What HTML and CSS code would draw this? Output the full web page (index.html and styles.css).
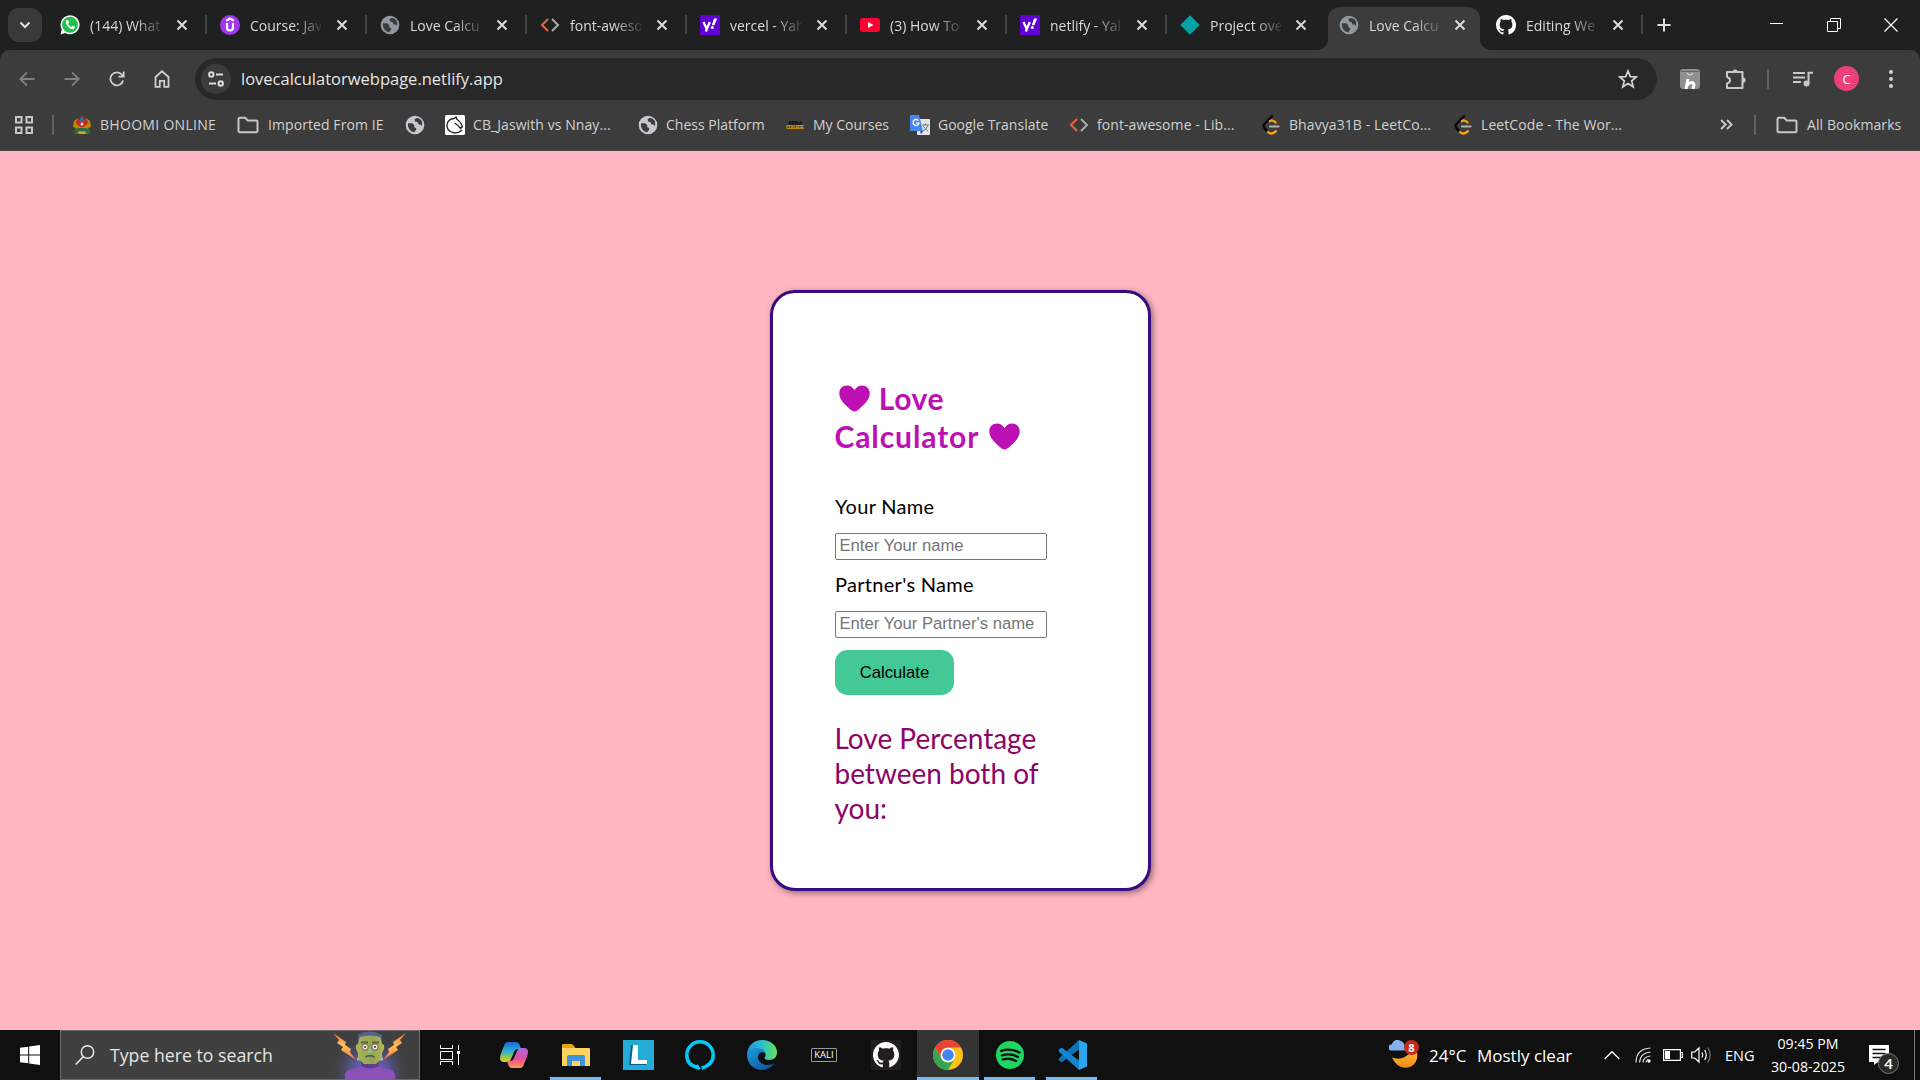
FILE: index.html
```html
<!DOCTYPE html>
<html lang="en">
<head>
<meta charset="utf-8">
<title>Love Calculator</title>
<link rel="stylesheet" href="styles.css">
</head>
<body>
<svg class="defs" width="0" height="0" aria-hidden="true">
  <defs>
    <symbol id="globe" viewBox="0 0 20 20"><circle cx="10" cy="10" r="9.3" fill="currentColor"/><path d="M3 8.200h4.200l2 1.800v2.200l2 .8v1.600l-2 2.600c-4-.5-6.600-4-6.200-9zM11.500 3l-2 1.200.6 2.300 2.400.6 1 2.400h2.400l.6 1.800c1-1.500.8-3.500.2-5.300-1-2-3-3-5.200-3z" fill="#3b3c3e"/></symbol>
    <symbol id="x" viewBox="0 0 12 12"><path d="M1.500 1.500l9 9M10.500 1.500l-9 9" stroke="currentColor" stroke-width="2" fill="none"/></symbol>
    <symbol id="code" viewBox="0 0 20 20"><path d="M8 4L2 10l6 6" stroke="#e8653a" stroke-width="2" fill="none"/><path d="M12 4l6 6-6 6" stroke="#aaa" stroke-width="2" fill="none"/></symbol>
    <symbol id="yahoo" viewBox="0 0 20 20"><path fill="#6001d2" d="M0 0h20v20H0z"/><path d="M3.500 7l3 6.500M9.800 7L5.800 16.500" stroke="#fff" stroke-width="2.300"/><path d="M14 3.500h3.200l-2.800 6.700h-2.600z" fill="#fff"/><circle cx="12.300" cy="12.400" r="1.500" fill="#fff"/></symbol>
    <symbol id="github" viewBox="0 0 16 16"><path fill="#fff" d="M8 0C3.580 0 0 3.580 0 8c0 3.540 2.290 6.530 5.470 7.590.4.070.55-.17.55-.38 0-.19-.01-.82-.01-1.490-2.010.37-2.530-.49-2.690-.94-.09-.23-.48-.94-.82-1.130-.28-.15-.68-.52-.01-.53.63-.01 1.080.58 1.230.82.72 1.210 1.870.87 2.330.66.070-.52.28-.87.51-1.070-1.780-.2-3.640-.89-3.640-3.950 0-.87.31-1.590.82-2.150-.08-.2-.36-1.020.08-2.120 0 0 .67-.21 2.200.82.640-.18 1.320-.27 2-.27s1.360.09 2 .27c1.530-1.040 2.200-.82 2.200-.82.440 1.100.16 1.920.08 2.120.51.56.82 1.270.82 2.150 0 3.070-1.870 3.750-3.650 3.950.29.25.54.73.54 1.480 0 1.070-.01 1.930-.01 2.200 0 .21.15.46.55.38A8 8 0 0 0 16 8c0-4.420-3.580-8-8-8z"/></symbol>
    <symbol id="folder" viewBox="0 0 22 18"><path d="M1.500 15V3q0-1.200 1.200-1.200h5.500l2.500 2.700h8.600q1.200 0 1.200 1.200V15q0 1.200-1.200 1.200H2.700Q1.500 16.200 1.500 15z" fill="none" stroke="#c7c7c7" stroke-width="2"/></symbol>
    <symbol id="leet" viewBox="0 0 20 20"><path d="M11 1L3.500 9q-1.800 2 0 4l3 3.500" fill="none" stroke="#070707" stroke-width="2.300" stroke-linecap="round"/><path d="M9 6q2.500-1.800 5.500 1.500M7 17q3.500 3.500 8-.8" fill="none" stroke="#ffa116" stroke-width="2.300" stroke-linecap="round"/><path d="M9 11.500h8.500" stroke="#b3b3b3" stroke-width="2.200" stroke-linecap="round"/></symbol>
    <symbol id="heart" viewBox="0 0 31 27"><path fill="#bc10b4" d="M15.500 26.500c-1.500 0-3-1-5-2.800C5.500 19.500.3 14.500.3 8.300.3 3.800 3.500.5 7.900.5c3.300 0 6 1.700 7.600 4.700C17.100 2.200 19.800.5 23.100.5c4.400 0 7.600 3.300 7.600 7.800 0 6.200-5.200 11.200-10.200 15.400-2 1.800-3.500 2.800-5 2.800z"/></symbol>
  </defs>
</svg>

<header class="tabstrip">
  <div class="tabsearch"><svg width="12" height="8" viewBox="0 0 12 8"><path d="M1.500 1.500L6 6l4.500-4.500" fill="none" stroke="#e3e3e3" stroke-width="2"/></svg></div>
  <div class="tab"><svg class="fav" viewBox="0 0 20 20"><path d="M.5 19.500l1.300-5A9.500 9.500 0 1 1 5.300 18z" fill="#fff"/><circle cx="10" cy="9.800" r="8" fill="#1fc14b"/><path d="M6.500 5.200c-3 2.600 3.600 10.500 7.300 8.700 1.200-.7 1.400-1.900.8-2.300l-1.900-.9c-.6 0-.9 1.200-1.500 1.100-1.300-.5-2.400-1.600-3-2.900.1-.6 1-.9.800-1.500L8.100 5.300c-.4-.5-1.100-.4-1.600-.1z" fill="#fff"/></svg><span class="title">(144) What</span><svg class="close"><use href="#x"/></svg></div>
  <div class="tab"><svg class="fav" viewBox="0 0 20 20"><circle cx="10" cy="10" r="10" fill="#a435f0"/><path d="M6.200 5.800L10 3.600l3.800 2.200M7 8v4.500q0 3 3 3t3-3V8" fill="none" stroke="#fff" stroke-width="2.200"/></svg><span class="title">Course: Jav</span><svg class="close"><use href="#x"/></svg></div>
  <div class="tab"><svg class="fav grey"><use href="#globe"/></svg><span class="title">Love Calcu</span><svg class="close"><use href="#x"/></svg></div>
  <div class="tab"><svg class="fav"><use href="#code"/></svg><span class="title">font-aweso</span><svg class="close"><use href="#x"/></svg></div>
  <div class="tab"><svg class="fav"><use href="#yahoo"/></svg><span class="title">vercel - Yah</span><svg class="close"><use href="#x"/></svg></div>
  <div class="tab"><svg class="fav" viewBox="0 0 20 20"><rect y="3" width="20" height="14" rx="3" fill="#ff0033"/><path d="M8 7l5.500 3L8 13z" fill="#fff"/></svg><span class="title">(3) How To</span><svg class="close"><use href="#x"/></svg></div>
  <div class="tab"><svg class="fav"><use href="#yahoo"/></svg><span class="title">netlify - Yal</span><svg class="close"><use href="#x"/></svg></div>
  <div class="tab last-before"><svg class="fav" viewBox="0 0 20 20"><path d="M10 .3l9.700 9.700-9.700 9.700L.3 10z" fill="#05a3a3"/></svg><span class="title">Project ove</span><svg class="close"><use href="#x"/></svg></div>
  <div class="tab active"><svg class="fav grey"><use href="#globe"/></svg><span class="title">Love Calcu</span><svg class="close"><use href="#x"/></svg></div>
  <div class="tab"><svg class="fav"><use href="#github"/></svg><span class="title">Editing We</span><svg class="close"><use href="#x"/></svg></div>
  <svg class="newtab" viewBox="0 0 14 14"><path d="M7 .5v13M.5 7h13" stroke="#dedede" stroke-width="2"/></svg>
  <div class="winbtns">
    <svg width="14" height="14"><path d="M0 5.500h13" stroke="#fff"/></svg>
    <svg width="14" height="14"><path d="M.5 3.500h10v10H.5zM3.500 3.500v-3h10v10h-3" fill="none" stroke="#fff"/></svg>
    <svg width="14" height="14"><path d="M.5.500l13 13M13.500.500l-13 13" stroke="#fff" stroke-width="1.200"/></svg>
  </div>
</header>

<div class="chrome">
  <div class="toolbar">
    <svg class="nav dim" viewBox="0 0 16 16"><path d="M15.500 8H1.500M8 1.300L1.300 8 8 14.700"/></svg>
    <svg class="nav dim" viewBox="0 0 16 16"><path d="M.5 8h14M8 1.300L14.700 8 8 14.700"/></svg>
    <svg class="nav" viewBox="0 0 16 16"><path d="M14.200 9.500A6.500 6.500 0 1 1 13 3.800l1.700 1.700M14.700.5v5.200H9.500"/></svg>
    <svg class="nav" viewBox="0 0 16 18"><path d="M1.500 7L8 1.300 14.500 7v9.800h-4.300v-6H5.800v6H1.500z"/></svg>
    <div class="omnibox">
      <div class="site"><svg width="16" height="16" viewBox="0 0 16 16"><g fill="none" stroke="#dcdcdc" stroke-width="2"><circle cx="3.300" cy="3.500" r="2.200"/><path d="M8 3.500h7M1 12.500h7"/><circle cx="12.700" cy="12.500" r="2.200"/></g></svg></div>
      <span class="url">lovecalculatorwebpage.netlify.app</span>
      <svg class="star" viewBox="0 0 20 20"><path d="M10 2l2.300 5.600 6 .4-4.600 3.900 1.500 5.900L10 14.500l-5.200 3.300 1.500-5.900L1.700 8l6-.4z" fill="none" stroke="#d4d4d4" stroke-width="1.700"/></svg>
    </div>
    <svg class="ext" viewBox="0 0 20 22"><rect y="1" width="20" height="20" rx="3" fill="#8f8f8f"/><path d="M1 3.500h18" stroke="#666"/><path d="M7 5q3 4 6 0" fill="none" stroke="#ddd" stroke-width="1.200"/><path d="M6 21l2-10M7 17q6-5 7 0l-1 4" fill="none" stroke="#fff" stroke-width="3"/></svg>
    <svg class="puzzle" viewBox="0 0 22 22"><path d="M2 4H17.500V20H2v-4.500q3-.7 3-3.200T2 9z" fill="none" stroke="#c9c9c9" stroke-width="2" stroke-linejoin="round"/><path d="M7.500 4a2.600 2.600 0 0 1 5.200 0zM18 9.500a2.600 2.600 0 0 1 0 5.200z" fill="#c9c9c9"/></svg>
    <i class="rule tall"></i>
    <svg class="media" viewBox="0 0 20 16"><path d="M0 2h12M0 6.500h12M0 11h8M15.500 12V1.700H20" fill="none" stroke="#c9c9c9" stroke-width="2"/><circle cx="13.500" cy="12.500" r="3" fill="#c9c9c9"/></svg>
    <span class="avatar">C</span>
    <svg class="dots" viewBox="0 0 6 20"><g fill="#d2d2d2"><circle cx="3" cy="3" r="2"/><circle cx="3" cy="10" r="2"/><circle cx="3" cy="17" r="2"/></g></svg>
  </div>
  <nav class="bookmarks">
    <svg class="apps" viewBox="0 0 18 18"><g fill="none" stroke="#c7c7c7" stroke-width="2"><path d="M1 1h5.500v5.500H1zM11.500 1H17v5.500h-5.500zM1 11.500h5.500V17H1zM11.500 11.500H17V17h-5.500z"/></g></svg>
    <i class="rule"></i>
    <a class="bm b1"><svg viewBox="0 0 20 20"><path d="M10 0l2.500 4-2.500 2-2.500-2z" fill="#a62a2a"/><path d="M2 6l4-3 2 3 2-2 2 2 2-3 4 3 1 6-3 1 2 5-4 1-4-2-4 2-4-1 2-5-3-1z" fill="#b8860b"/><path d="M6 3l2 4-2 4-2-4zM14 3l2 4-2 4-2-4z" fill="#c4231f"/><path d="M8 3h4v3H8z" fill="#356fa8"/><circle cx="10" cy="9" r="3.300" fill="#d2232a"/><circle cx="10" cy="9" r="1.500" fill="#dfe6ee"/><path d="M6 13h8v3H6zM2 15l4-2v5H1zM18 15l-4-2v5h5z" fill="#2a6b45"/><path d="M7 17h6v2H7z" fill="#d9a520"/></svg><span>BHOOMI ONLINE</span></a>
    <a class="bm b2"><svg class="wide"><use href="#folder"/></svg><span>Imported From IE</span></a>
    <a class="bm b3"><svg class="light"><use href="#globe"/></svg></a>
    <a class="bm b4"><svg viewBox="0 0 20 20"><rect width="20" height="20" rx="1.500" fill="#fff"/><path d="M17 15Q13 19 7.500 17.500 1.500 15.500 2 9.500 3 4 9 3.500l2-1.500 1 2.500q3 1.500 5.500 7l-2 2q-3-4-6-5.500" fill="none" stroke="#222" stroke-width="1.300"/></svg><span>CB_Jaswith vs Nnay...</span></a>
    <a class="bm b5"><svg class="light"><use href="#globe"/></svg><span>Chess Platform</span></a>
    <a class="bm b6"><svg viewBox="0 0 20 20"><text x="10" y="9.500" class="apna" fill="#050505" textLength="14">APNA</text><text x="10" y="14" class="apna" fill="#e8a100" textLength="18">COLLEGE</text></svg><span>My Courses</span></a>
    <a class="bm b7"><svg viewBox="0 0 20 20"><rect x="7" y="4" width="13" height="16" rx="1" fill="#e3e5e8"/><path d="M12 10h7M15.500 8.500V10M18 10q-1 4-5 6M13 11q2 3 5 5" stroke="#6a7a84" fill="none"/><path d="M1 0h8l4 16H1q-1 0-1-1V1q0-1 1-1z" fill="#4a85ee"/><path d="M10 16h3l-2 3.500z" fill="#2b58b8"/><path d="M8.400 5.600A3 3 0 1 0 9 8.200H6" fill="none" stroke="#fff" stroke-width="1.300"/></svg><span>Google Translate</span></a>
    <a class="bm b8"><svg><use href="#code"/></svg><span>font-awesome - Lib...</span></a>
    <a class="bm b9"><svg><use href="#leet"/></svg><span>Bhavya31B - LeetCo...</span></a>
    <a class="bm b10"><svg><use href="#leet"/></svg><span>LeetCode - The Wor...</span></a>
    <svg class="more" viewBox="0 0 12 10"><path d="M1 .8L5.200 5 1 9.200M6.500.8L10.700 5 6.500 9.200" fill="none" stroke="#c7c7c7" stroke-width="1.800"/></svg>
    <i class="rule"></i>
    <a class="bm b11"><svg class="wide"><use href="#folder"/></svg><span>All Bookmarks</span></a>
  </nav>
</div>

<main class="page">
  <section class="card">
    <h1><svg class="heart"><use href="#heart"/></svg> <span class="h1a">Love</span><br><span class="h1b">Calculator</span> <svg class="heart second"><use href="#heart"/></svg></h1>
    <label for="you">Your Name</label>
    <input id="you" placeholder="Enter Your name">
    <label for="partner">Partner's Name</label>
    <input id="partner" placeholder="Enter Your Partner's name">
    <button>Calculate</button>
    <p>Love Percentage<br>between both of<br>you:</p>
  </section>
</main>

<footer class="taskbar">
  <div class="start"><svg width="20" height="20" viewBox="0 0 20 20"><path d="M0 2.800l8.200-1.100v7.800H0zM9.200 1.500L20 0v9.500H9.200zM0 10.500h8.200v7.800L0 17.200zM9.200 10.500H20V20L9.200 18.500z" fill="#fff"/></svg></div>
  <div class="search">
    <svg class="lens" viewBox="0 0 20 20"><circle cx="12.500" cy="7" r="6.200" fill="none" stroke="#eee" stroke-width="1.400"/><path d="M8.200 11.700L.7 19.400" stroke="#eee" stroke-width="1.500"/></svg>
    <span>Type here to search</span>
    <svg class="monster" viewBox="0 0 88 48">
      <defs><radialGradient id="glow"><stop offset="0" stop-color="#7a72d8"/><stop offset=".5" stop-color="#615cae" stop-opacity=".7"/><stop offset="1" stop-color="#404040" stop-opacity="0"/></radialGradient><linearGradient id="bolt" x2="0" y2="1"><stop offset="0" stop-color="#ef7d3c"/><stop offset=".5" stop-color="#ffc25a"/><stop offset="1" stop-color="#ef6a42"/></linearGradient><linearGradient id="skin"><stop offset="0" stop-color="#a9b84e"/><stop offset=".6" stop-color="#93a552"/><stop offset="1" stop-color="#b3bd55"/></linearGradient></defs>
      <ellipse cx="44" cy="40" rx="40" ry="36" fill="url(#glow)"/>
      <path id="b" d="M7 2l13 9-1 3 6 4-1 3 6 8-15-10 2-3-6-4 2-3zM80 2L67 11l1 3-6 4 1 3-6 8 15-10-2-3 6-4-2-3z" fill="url(#bolt)"/>
      <path d="M19 48v-4q1-6 8-6l10-3h14l10 3q7 0 8 6v4z" fill="#8a52b8"/><path d="M35 29h18v6q-9 5-18 0z" fill="#613c8e"/>
      <path d="M31 28h5M52 28h5" stroke="#aeb3c0" stroke-width="3"/>
      <path d="M33 4q11-6 22 0l1 9q3 0 2 5l-2 4v5l-6 6H38l-6-6v-5l-2-4q-1-5 2-5z" fill="url(#skin)"/><path d="M32 12V4q12-7 24 0v8l-2-6q-10-3-20 0z" fill="#5e5c91"/>
      <path d="M35 11.500h7M46 11.500h7" stroke="#5d6638" stroke-width="1.800"/>
      <circle cx="39" cy="16" r="3.200" fill="#f4e6be" stroke="#6a5a74"/><circle cx="49" cy="16" r="3.200" fill="#f4e6be" stroke="#6a5a74"/><circle cx="39" cy="16" r="1.100" fill="#7b3146"/><circle cx="49" cy="16" r="1.100" fill="#7b3146"/><path d="M44 17l2.500 4.500h-5z" fill="#8fc1b4"/><path d="M39.500 26q4.500-2.500 9 0" stroke="#48525a" fill="none" stroke-width="1.600"/>
    </svg>
  </div>
  <div class="task first"><svg width="22" height="20" viewBox="0 0 22 20"><path d="M1.500 0v3.500h12V0M1.500 6.500h12v8h-12zM1.500 20v-3.500h12V20M19.500 0v5M19.500 9v11" fill="none" stroke="#fff"/><path d="M18 6h3v3h-3z" fill="#fff"/></svg></div>
  <div class="task"><svg width="28" height="26" viewBox="0 0 28 26"><defs><linearGradient id="cp1" x2="0" y2="1"><stop offset="0" stop-color="#1e62d4"/><stop offset=".45" stop-color="#22b2d9"/><stop offset=".75" stop-color="#95c94d"/><stop offset="1" stop-color="#f8ba28"/></linearGradient><linearGradient id="cp2" x2="0" y2="1"><stop offset="0" stop-color="#a968e4"/><stop offset=".55" stop-color="#e74f9b"/><stop offset="1" stop-color="#ff9650"/></linearGradient></defs><path d="M8 0h8q3 0 4 4l1 3h-3q-3 0-4 3l-3 7q-1 3-4 3H4q-4 0-4-4 0-3 4-12Q5 0 8 0z" fill="url(#cp1)"/><path d="M20 26h-8q-3 0-4-4l-1-3h3q3 0 4-3l3-7q1-3 4-3h3q4 0 4 4 0 3-4 12-1 4-4 4z" fill="url(#cp2)"/></svg></div>
  <div class="task open"><svg width="28" height="24" viewBox="0 0 28 24"><path d="M1 1h9l3 3v5H0V2q0-1 1-1z" fill="#e6a20f"/><path d="M0 5h27q1 0 1 1v16q0 1-1 1H1q-1 0-1-1z" fill="#ffd45e"/><path d="M5 23v-9q0-2 2-2h14q2 0 2 2v9h-5v-5h-8v5z" fill="#3d94dc"/></svg></div>
  <div class="task"><svg width="31" height="30" viewBox="0 0 31 30"><path d="M0 0h31v30H0z" fill="#25abd7"/><path d="M8 5L6 25h17l1-4H11l2-16z" fill="#0a6187"/><path d="M10 5h5v15h9v4H8z" fill="#fff"/></svg></div>
  <div class="task"><svg width="30" height="30" viewBox="0 0 30 30"><path d="M13 27.500C5 26 1.800 21 1.800 15a13.200 13.200 0 0 1 26.400 0c0 6-3.500 10.700-11.700 13.200" fill="none" stroke="#05c8f7" stroke-width="3.500"/><path d="M11.500 25l3 4.500" stroke="#05c8f7" stroke-width="3"/></svg></div>
  <div class="task"><svg width="30" height="30" viewBox="0 0 30 30"><defs><linearGradient id="e1"><stop offset="0" stop-color="#2092dc"/><stop offset=".5" stop-color="#2bbfd0"/><stop offset="1" stop-color="#67e158"/></linearGradient><linearGradient id="e2" x2="1" y2="1"><stop offset="0" stop-color="#1b9de2"/><stop offset="1" stop-color="#104a95"/></linearGradient></defs><path d="M0 14C1 5 7 0 15 0c9 0 15 6 15 12 0 5-3 8-8 8-4 0-5-1.500-4-3 2-4-1-7-6-7-6 0-11 2-12 4z" fill="url(#e1)"/><path d="M0 14c1-4 5-6 10-6 5 0 8 3 8 5-4-2-7 1-7 4 0 5 5 8 10 8 3 0 5-1 6.500-2C25 27 20 30 15 30 6 30 0 23 0 14z" fill="url(#e2)"/></svg></div>
  <div class="task"><span class="kali">KALI</span></div>
  <div class="task"><span class="ghbox"><svg width="26" height="26"><use href="#github"/></svg></span></div>
  <div class="task open current"><svg width="30" height="30" viewBox="0 0 30 30"><circle cx="15" cy="15" r="15" fill="#fbc31a"/><path d="M2 7.500A15 15 0 0 1 28 7.500H15a7.500 7.500 0 0 0-6.500 11.250z" fill="#e94335"/><path d="M2 7.500A15 15 0 0 0 15 30l6.500-11.250a7.500 7.500 0 0 1-13 0z" fill="#33a554"/><circle cx="15" cy="15" r="7.300" fill="#fff"/><circle cx="15" cy="15" r="5.800" fill="#4285f4"/></svg></div>
  <div class="task open"><svg width="28" height="28" viewBox="0 0 28 28"><circle cx="14" cy="14" r="14" fill="#1ed760"/><path d="M5 9.800q9-3 18.500 1.700M6 14.300q8-2.500 16 1.600M6.700 18.500q7-2 13.500 1.500" fill="none" stroke="#101010" stroke-width="2.300" stroke-linecap="round"/></svg></div>
  <div class="task open"><svg width="30" height="30" viewBox="0 0 30 30"><path d="M22 0L2.200 18q-1.500 1.500 0 2.600l1.300 1.200q1 .8 2.200 0L24 8z" fill="#0d72b9"/><path d="M22 30L2.200 12q-1.500-1.500 0-2.600l1.300-1.200q1-.8 2.200 0L24 22z" fill="#1485cf"/><path d="M22 0l8 3.500v23L22 30z" fill="#2aa5f0"/></svg></div>

  <div class="tray">
    <div class="weather"><svg width="30" height="30" viewBox="0 0 30 30"><defs><linearGradient id="mn" x2="0" y2="1"><stop offset="0" stop-color="#ffb62e"/><stop offset="1" stop-color="#f08a1c"/></linearGradient></defs><path d="M3 17.500q11 4 19-6l6 1q2 10-7 14.500-12 3.500-18-9.500z" fill="url(#mn)"/><path d="M2.500 10.500a3 3 0 0 1 0-6q3-6.500 8.500-4Q17 3 16 10.500z" fill="#83b2f3"/><circle cx="22.500" cy="7.500" r="7.500" fill="#c42b1c"/><text x="22.500" y="11.500" class="badge8">8</text></svg></div>
    <span class="temp">24°C</span><span class="cond">Mostly clear</span>
    <svg class="chev" viewBox="0 0 16 10"><path d="M.7 9L8 1.700 15.300 9" fill="none" stroke="#fff" stroke-width="1.300"/></svg>
    <svg class="wifi" viewBox="0 0 16 16"><g fill="none" stroke="#ddd" stroke-width="1.200"><path d="M1 15.500Q1 2 15.500 1M4.500 15.500Q5 6 15.500 5M8 15.500Q8.500 9.500 15.500 9"/></g><circle cx="14" cy="14" r="1.700" fill="#fff"/><path d="M11 15.500q0-2 2-3" stroke="#fff" fill="none"/></svg>
    <svg class="batt" viewBox="0 0 20 12"><path d="M.6.600h16.800v10.800H.6zM18 3.500h1.300v5H18" fill="none" stroke="#fff" stroke-width="1.200"/><path d="M2 2h5v8H2z" fill="#fff"/></svg>
    <svg class="vol" viewBox="0 0 21 18"><path d="M.7 6h3L8 2v14l-4.300-4h-3zM11 6.500q1.500 2.500 0 5M13.700 4q3 5 0 10" fill="none" stroke="#fff" stroke-width="1.200"/><path d="M16.700 1.500q5 7.500 0 15" fill="none" stroke="#777" stroke-width="1.200"/></svg>
    <span class="eng">ENG</span>
    <div class="clock"><span class="time">09:45 PM</span><span class="date">30-08-2025</span></div>
    <div class="notif"><svg width="20" height="20" viewBox="0 0 20 20"><path d="M0 0h20v17H9l-4 3v-3H0z" fill="#fff"/><path d="M3.500 4.500h13M3.500 8.500h13M3.500 12.500h9" stroke="#101010" stroke-width="1.300"/></svg><b>4</b></div>
    <i class="desk"></i>
  </div>
</footer>
</body>
</html>
```
FILE: styles.css
```css
* { box-sizing: border-box; }
body { margin: 0; width: 1920px; height: 1080px; overflow: hidden; display: flex; flex-direction: column; font-family: "Open Sans", "Noto Sans", sans-serif; font-size: 14px; color: #d8d8d8; background: #1f2120; }
.defs { position: absolute; }
svg { display: block; flex: none; }

.tabstrip { height: 50px; display: flex; align-items: center; background: #1f2120; }
.tabsearch { width: 34px; height: 34px; margin: 0 4px 0 8px; border-radius: 11px; background: #3a3a3a; display: flex; align-items: center; justify-content: center; }
.tab { position: relative; width: 160px; height: 50px; padding-left: 14px; display: flex; align-items: center; }
.tab::after { content: ""; position: absolute; right: -1px; top: 15px; width: 2px; height: 19px; background: #424443; }
.tab.last-before::after { display: none; }
.fav { width: 20px; height: 20px; margin-right: 10px; }
.grey { color: #8f979f; }
.title { width: 71px; white-space: nowrap; -webkit-mask-image: linear-gradient(90deg, #000 62%, rgba(0, 0, 0, .15)); mask-image: linear-gradient(90deg, #000 62%, rgba(0, 0, 0, .15)); }
.close { width: 12px; height: 12px; margin-left: 15px; color: #d9d9d9; }
.last-before { width: 159px; }
.last-before .close { margin-left: 14px; }
.tab.active { width: 157px; height: 43px; align-self: flex-end; padding-bottom: 7px; }
.tab.active > * { z-index: 1; }
.tab.active .close { margin-left: 14px; }
.tab.active::before { content: ""; position: absolute; left: 3px; width: 152px; top: 0; bottom: 0; border-radius: 12px 12px 0 0; background: #3c3c3c; }
.tab.active::after { left: -9px; right: auto; top: 31px; width: 176px; height: 12px; background: radial-gradient(circle at 0 0, transparent 12px, #3c3c3c 12.5px) left / 12px 12px no-repeat, radial-gradient(circle at 100% 0, transparent 12px, #3c3c3c 12.5px) right / 12px 12px no-repeat; }
.newtab { width: 14px; height: 14px; margin-left: 15px; }
.winbtns { margin-left: auto; padding-right: 22px; display: flex; gap: 43px; }

.chrome { height: 101px; background: #3c3c3c; border-radius: 10px 10px 0 0; border-bottom: 1px solid #4a4648; }
.toolbar { height: 57px; display: flex; align-items: center; }
.nav { width: 16px; height: 18px; margin-left: 29px; fill: none; stroke: #cfcfcf; stroke-width: 1.800; }
.nav:first-child { margin-left: 19px; }
.nav.dim { stroke: #808080; }
.omnibox { width: 1462px; height: 42px; margin-left: 25px; border-radius: 21px; background: #282828; display: flex; align-items: center; padding-left: 6px; }
.site { width: 30px; height: 30px; border-radius: 15px; background: #3c3c3c; display: flex; align-items: center; justify-content: center; }
.url { margin-left: 10px; font-size: 16.500px; color: #e6e6e6; white-space: nowrap; }
.star { width: 20px; height: 20px; margin-left: auto; margin-right: 19px; }
.ext { width: 20px; height: 22px; margin-left: 23px; }
.puzzle { width: 22px; height: 22px; margin-left: 25px; }
.rule { display: block; flex: none; width: 2px; height: 20px; background: #606060; }
.rule.tall { margin-left: 20px; }
.media { width: 20px; height: 16px; margin-left: 24px; }
.avatar { width: 25px; height: 25px; margin-left: 21px; border-radius: 50%; background: #ec407a; color: #fff; font-size: 13px; display: flex; align-items: center; justify-content: center; }
.dots { width: 6px; height: 20px; margin-left: 29px; }

.bookmarks { height: 35px; display: flex; align-items: center; white-space: nowrap; }
.apps { width: 18px; height: 18px; margin-left: 15px; }
.apps + .rule { margin-left: 19px; }
.bm { flex: none; height: 24px; display: flex; align-items: center; gap: 8px; color: #d0d0d0; }
.bm span { padding-bottom: 1px; letter-spacing: .08px; }
.bm svg { width: 20px; height: 20px; }
.bm .wide { width: 22px; height: 18px; margin-right: 1px; }
.bm .light { color: #c5c8cd; }
.b1 { width: 165px; margin-left: 18px; }
.b1 span { letter-spacing: .3px; }
.b2 { width: 168px; }
.b3 { width: 40px; }
.b4 { width: 193px; }
.b5 { width: 147px; }
.b5 span, .b6 span, .b7 span { letter-spacing: 0; }
.b6 { width: 125px; }
.b7 { width: 159px; }
.b8 { width: 192px; }
.b9 { width: 192px; }
.b10 { width: 267px; }
.apna { font: bold 5px "Liberation Sans", sans-serif; text-anchor: middle; }
.more { width: 13px; height: 11px; }
.more + .rule { margin: 0 20px 0 21px; }

.page { height: 879px; background: #ffb6c1; display: flex; justify-content: center; align-items: flex-start; padding-top: 139px; }
.card { width: 381px; height: 601px; border: 3px solid #360a80; border-radius: 25px; background: #fff; padding: 86px 62px 0; box-shadow: 2px 2px 6px rgba(70, 50, 60, .6); font-family: Lato, sans-serif; color: #000; display: flex; flex-direction: column; align-items: flex-start; }
.card h1 { margin: 0 0 39px; font-size: 30px; line-height: 38px; font-weight: 700; color: #bc10b4; white-space: nowrap; }
.h1a { letter-spacing: .6px; }
.h1b { letter-spacing: .9px; }
.heart { display: inline-block; width: 31px; height: 27px; margin: 0 2px 0 4px; vertical-align: -2px; }
.heart.second { margin-left: 2px; }
.card label { font-size: 20px; line-height: 25px; margin-bottom: 14px; padding-left: .5px; letter-spacing: .3px; }
.card input { width: 212px; height: 27px; margin: 0 0 12px; padding: 0 4px 1px; border: 1px solid #767676; border-radius: 2px; font: 16.670px "Liberation Sans", Arial, sans-serif; }
.card input::placeholder { color: #757575; }
.card button { width: 119px; height: 45px; padding: 0 0 0 1px; border: 0; border-radius: 12.500px; background: #43c896; color: #000; font: 16.670px "Liberation Sans", Arial, sans-serif; }
.card p { margin: 26px 0 0; font-size: 28px; line-height: 35px; color: #8c0566; white-space: nowrap; }

.taskbar { height: 50px; background: #101010; display: flex; color: #fff; }
.start { width: 60px; display: flex; align-items: center; justify-content: center; }
.search { width: 360px; margin-right: -1px; background: #404040; border: 1px solid #6c6c6c; display: flex; align-items: center; font-size: 17.700px; color: #e4e4e4; white-space: nowrap; overflow: hidden; }
.lens { width: 20px; height: 20px; margin: 0 15px 0 14px; }
.monster { width: 88px; height: 48px; margin-left: auto; margin-right: 5px; }
.task { flex: none; width: 62px; padding-bottom: 1px; display: flex; align-items: center; justify-content: center; position: relative; }
.task.first { margin-right: 2px; }
.task.open::after { content: ""; position: absolute; left: 5px; right: 6px; bottom: 0; height: 3px; background: #76b9ed; }
.task.current { background: #343434; }
.task.current::after { left: 0; right: 0; }
.kali { width: 26px; height: 14px; border: 1px solid #999; border-radius: 1px; color: #fff; font: 9.500px/12px "Open Sans", sans-serif; text-align: center; }
.ghbox { width: 30px; height: 30px; background: #211d20; display: flex; align-items: center; justify-content: center; }
.tray { margin-left: auto; display: flex; align-items: center; font-size: 17px; white-space: nowrap; }
.badge8 { font: bold 11px "Open Sans", sans-serif; fill: #fff; text-anchor: middle; }
.weather { margin-right: 10px; padding-bottom: 1px; }
.temp { width: 48px; }
.cond { width: 127px; }
.chev { width: 16px; height: 10px; margin-right: 15px; }
.wifi { width: 16px; height: 16px; margin-right: 12px; }
.batt { width: 20px; height: 12px; margin-right: 8px; }
.vol { width: 21px; height: 18px; margin-right: 13px; }
.eng { width: 37px; font-size: 14.500px; }
.clock { width: 92px; display: flex; flex-direction: column; align-items: center; font-size: 14.200px; line-height: 23px; }
.notif { width: 45px; padding-left: 15px; position: relative; }
.notif b { position: absolute; left: 24px; top: 8px; width: 21px; height: 21px; border: 1px solid #777; border-radius: 50%; background: #2a2a2a; font: 600 15px/18px "Open Sans", sans-serif; text-align: center; }
.desk { width: 1px; height: 50px; background: #777; margin-left: 15px; margin-right: 5px; }
```
